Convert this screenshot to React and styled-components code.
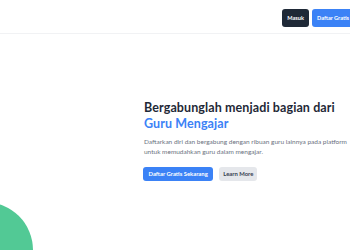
import styled, { createGlobalStyle } from "styled-components";

const GlobalStyle = createGlobalStyle`
  html, body {
    margin: 0;
    padding: 0;
    overflow: hidden;
    background: #fff;
  }
  body {
    font-family: Lato, "Noto Sans", sans-serif;
  }
`;

const App = () => {
  return (
    <Page>
      <GlobalStyle />
      <Header>
        <Nav>
          <NavButton $dark>Masuk</NavButton>
          <NavButton>Daftar Gratis</NavButton>
        </Nav>
      </Header>

      <Hero>
        <HeroText>
          <Title>
            Bergabunglah menjadi bagian dari
            <br />
            <Accent>Guru Mengajar</Accent>
          </Title>
          <Lead>
            Daftarkan diri dan bergabung dengan ribuan guru lainnya pada platform
            untuk memudahkan guru dalam mengajar.
          </Lead>
          <Actions>
            <ActionButton $primary>Daftar Gratis Sekarang</ActionButton>
            <ActionButton>Learn More</ActionButton>
          </Actions>
        </HeroText>
      </Hero>

      <Blob />
    </Page>
  );
};

export default App;

const Page = styled.div`
  position: relative;
  width: 370px;
  height: 250px;
  overflow: hidden;
`;

const Header = styled.header`
  height: 33px;
  border-bottom: 1px solid #f1f2f4;
  display: flex;
  align-items: center;
  justify-content: flex-end;
  padding-right: 16px;
`;

const Nav = styled.nav`
  display: flex;
  gap: 3px;
  margin-top: 3px;
`;

const NavButton = styled.button`
  height: 18px;
  padding: 0 5px;
  border: none;
  border-radius: 3px;
  background: ${(p) => (p.$dark ? "#1f2937" : "#3b82f6")};
  color: #fff;
  font-family: Lato, "Noto Sans", sans-serif;
  font-size: 5.6px;
  font-weight: 700;
  line-height: 18px;
  cursor: pointer;
`;

const Hero = styled.main`
  padding: 66px 0 0 144px;
`;

const HeroText = styled.div`
  width: 212px;
`;

const Title = styled.h1`
  margin: 0;
  font-size: 12.5px;
  line-height: 16px;
  font-weight: 700;
  color: #1f2937;
  letter-spacing: 0.1px;
  white-space: nowrap;
`;

const Accent = styled.span`
  color: #3b82f6;
`;

const Lead = styled.p`
  margin: 4.5px 0 0;
  font-size: 6.5px;
  line-height: 10px;
  color: #6b7280;
`;

const Actions = styled.div`
  display: flex;
  gap: 6px;
  margin-top: 10px;
  margin-left: -1px;
`;

const ActionButton = styled.button`
  height: 14px;
  padding: 0 ${(p) => (p.$primary ? "5.5px" : "4px")};
  border: none;
  border-radius: 3px;
  background: ${(p) => (p.$primary ? "#3b82f6" : "#e5e7eb")};
  color: ${(p) => (p.$primary ? "#fff" : "#374151")};
  font-family: Lato, "Noto Sans", sans-serif;
  font-size: 5.9px;
  font-weight: 700;
  line-height: 14px;
  cursor: pointer;
`;

const Blob = styled.div`
  position: absolute;
  left: -63px;
  top: 202px;
  width: 96px;
  height: 96px;
  border-radius: 50%;
  background: #52c995;
`;
